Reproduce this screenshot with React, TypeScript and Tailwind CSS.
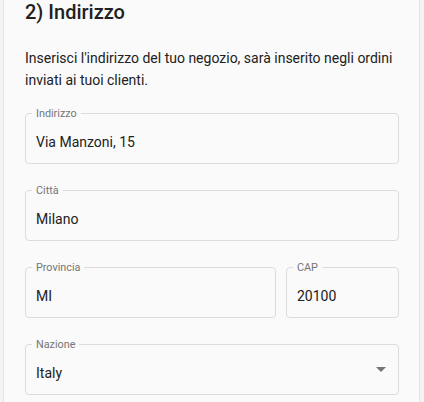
import React from "react";

function Field({
  label,
  value,
  className = "",
  select = false,
}: {
  label: string;
  value: string;
  className?: string;
  select?: boolean;
}) {
  return (
    <div
      className={`relative h-[51px] rounded-[4px] border border-[#dcdcdc] ${className}`}
    >
      <span className="absolute left-[6px] top-0 -translate-y-1/2 bg-[#fafafa] px-[4px] text-[10.8px] leading-[12px] text-[#757575]">
        {label}
      </span>
      <div className="pl-[10px] pt-[18px] text-[14px] leading-[20px] text-[#212121]">
        {value}
      </div>
      {select && (
        <svg
          className="absolute right-[12px] top-[22px]"
          width="10"
          height="5"
          viewBox="0 0 10 5"
        >
          <polygon points="0,0 10,0 5,5" fill="#757575" />
        </svg>
      )}
    </div>
  );
}

export default function App() {
  return (
    <div
      className="min-h-screen w-[424px] bg-[#f3f3f3] pl-[3px]"
      style={{ fontFamily: "Roboto, 'Noto Sans', sans-serif" }}
    >
      <div className="min-h-[402px] w-[417px] border-x border-[#e4e4e4] bg-[#fafafa] pl-[21px] pr-[20px]">
        <h2 className="text-[20px] font-medium leading-[24px] text-[#212121]">
          2) Indirizzo
        </h2>
        <p className="mt-[23px] text-[14px] leading-[22px] text-[#212121]">
          Inserisci l'indirizzo del tuo negozio, sarà inserito negli ordini
          inviati ai tuoi clienti.
        </p>
        <div className="mt-[22px] flex flex-col gap-[26px]">
          <Field label="Indirizzo" value="Via Manzoni, 15" />
          <Field label="Città" value="Milano" />
          <div className="flex gap-[10px]">
            <Field label="Provincia" value="MI" className="w-[251px]" />
            <Field label="CAP" value="20100" className="flex-1" />
          </div>
          <Field label="Nazione" value="Italy" select />
        </div>
      </div>
    </div>
  );
}
